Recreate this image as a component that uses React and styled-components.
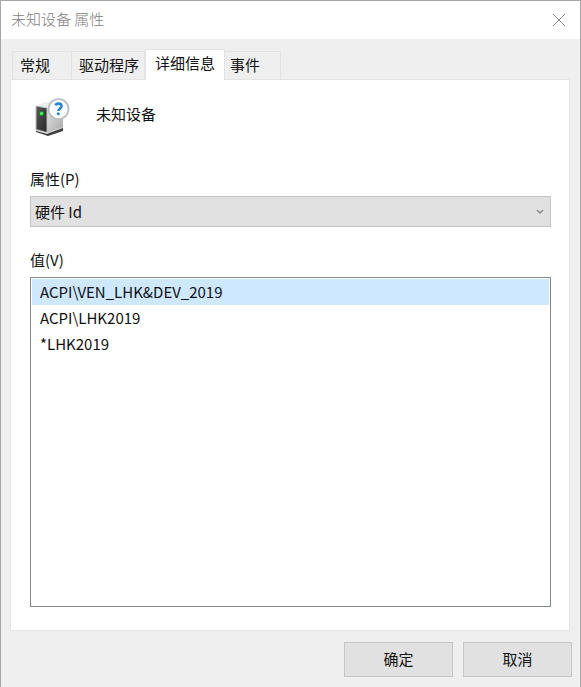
import React, { useState } from 'react';
import styled, { createGlobalStyle } from 'styled-components';

const TABS = ['常规', '驱动程序', '详细信息', '事件'];

const PROPERTIES = {
  '硬件 Id': ['ACPI\\VEN_LHK&DEV_2019', 'ACPI\\LHK2019', '*LHK2019'],
};

const DeviceIcon = () => (
  <svg width="36" height="40" viewBox="0 0 36 40" aria-hidden="true">
    <defs>
      <linearGradient id="front" x1="0" y1="0" x2="1" y2="1">
        <stop offset="0" stopColor="#5a5a5a" />
        <stop offset="1" stopColor="#262626" />
      </linearGradient>
      <linearGradient id="side" x1="0" y1="0" x2="1" y2="1">
        <stop offset="0" stopColor="#e6e6e6" />
        <stop offset="1" stopColor="#a9a9ab" />
      </linearGradient>
    </defs>
    <path d="M2 31 L13 34 L29 28 V33 L14 38 L2 34 Z" fill="#3d3d3d" />
    <path d="M2 31 L13 34 L29 28 V30 L13 36 L2 33 Z" fill="#cfcfcf" />
    <path d="M2 8 L12 4 L29 6 L13 11 Z" fill="#ececec" />
    <path d="M13 10 L29 6 V29 L13 34 Z" fill="url(#side)" />
    <path d="M2 8 L13 10 V34 L2 31 Z" fill="url(#front)" />
    <path d="M2 31 V8 L13 10 V34" fill="none" stroke="#bdbdbd" />
    <circle cx="7.5" cy="15.5" r="2.6" fill="#1f7a2c" />
    <circle cx="7.5" cy="15.5" r="1.7" fill="#3df252" />
    <circle cx="24.5" cy="11" r="10" fill="#fafbfc" stroke="#b9bcbe" strokeWidth="1.6" />
    <path
      d="M21.5 7.4 C22.2 5 27.5 4.8 27.5 8.1 C27.5 10.4 24.6 10.4 24.4 13"
      fill="none"
      stroke="#2c86cc"
      strokeWidth="2.6"
    />
    <circle cx="24.3" cy="15.8" r="1.5" fill="#2c86cc" />
  </svg>
);

const App = () => {
  const [activeTab, setActiveTab] = useState('详细信息');
  const [property, setProperty] = useState('硬件 Id');
  const [value, setValue] = useState(PROPERTIES[property][0]);

  return (
    <>
      <GlobalStyle />
      <Dialog role="dialog" aria-labelledby="dialog-title">
        <TitleBar>
          <Title id="dialog-title">未知设备 属性</Title>
          <CloseButton type="button" aria-label="关闭">
            <svg width="12" height="12" viewBox="0 0 12 12" aria-hidden="true">
              <path d="M0 0 L12 12 M12 0 L0 12" stroke="#8a8a8a" />
            </svg>
          </CloseButton>
        </TitleBar>

        <TabList role="tablist">
          {TABS.map(tab => (
            <Tab
              key={tab}
              type="button"
              role="tab"
              aria-selected={tab === activeTab}
              $active={tab === activeTab}
              onClick={() => setActiveTab(tab)}
            >
              {tab}
            </Tab>
          ))}
        </TabList>

        <Panel role="tabpanel">
          <DeviceHeader>
            <DeviceIcon />
            <span>未知设备</span>
          </DeviceHeader>

          <Label htmlFor="property">属性(P)</Label>
          <SelectWrapper>
            <PropertySelect
              id="property"
              value={property}
              onChange={e => setProperty(e.target.value)}
            >
              {Object.keys(PROPERTIES).map(name => (
                <option key={name}>{name}</option>
              ))}
            </PropertySelect>
            <svg width="8" height="6" viewBox="0 0 8 6" aria-hidden="true">
              <path d="M1 1 L4 4 L7 1" fill="none" stroke="#808080" strokeWidth="1.3" />
            </svg>
          </SelectWrapper>

          <Label htmlFor="values">值(V)</Label>
          <ValueList
            id="values"
            size={3}
            value={value}
            onChange={e => setValue(e.target.value)}
          >
            {PROPERTIES[property].map(item => (
              <option key={item}>{item}</option>
            ))}
          </ValueList>
        </Panel>

        <Footer>
          <Button type="button">确定</Button>
          <Button type="button">取消</Button>
        </Footer>
      </Dialog>
    </>
  );
};

const GlobalStyle = createGlobalStyle`
  * {
    box-sizing: border-box;
  }

  body {
    margin: 0;
    background: #efefef;
  }

  body, button, select {
    font-family: "Noto Sans CJK SC", sans-serif;
    font-size: 15px;
    line-height: 20px;
    color: #111;
  }
`;

const Dialog = styled.div`
  display: flex;
  flex-direction: column;
  min-height: 100vh;
  border: 1px solid #a6a6a6;
  border-bottom: none;
  background: #efefef;
`;

const TitleBar = styled.header`
  display: flex;
  align-items: center;
  justify-content: space-between;
  height: 38px;
  padding: 0 15px 0 10px;
  background: #fff;
`;

const Title = styled.h1`
  margin: 0;
  padding-bottom: 2px;
  font-size: 15px;
  font-weight: 300;
  color: #808080;
`;

const CloseButton = styled.button`
  display: flex;
  padding: 0;
  border: none;
  background: none;
`;

const TabList = styled.div`
  display: flex;
  align-items: flex-end;
  margin: 10px 11px 0;
`;

const Tab = styled.button`
  height: ${props => props.$active ? '31px' : '28px'};
  margin-bottom: ${props => props.$active ? '-1px' : '0'};
  padding: ${props => props.$active ? '0 9px 4px' : '0 5px 2px 7px'};
  border: 1px solid #e2e2e2;
  border-left-width: ${props => props.$active ? '1px' : '0'};
  border-bottom: none;
  background: ${props => props.$active ? '#fff' : '#efefef'};
  z-index: ${props => props.$active ? '1' : '0'};

  &:first-child {
    padding: 0 21px 2px 7px;
    border-left-width: 1px;
  }

  &:last-child {
    padding: 0 20px 2px 5px;
  }
`;

const Panel = styled.main`
  display: flex;
  flex: 1;
  flex-direction: column;
  margin: 0 10px 0 9px;
  padding: 18px 18px 23px 19px;
  border: 1px solid #e4e4e4;
  background: #fff;
`;

const DeviceHeader = styled.div`
  display: flex;
  align-items: center;
  gap: 26px;
  margin-bottom: 31px;
  padding-left: 4px;

  span {
    padding-bottom: 8px;
  }
`;

const Label = styled.label`
  margin-bottom: 7px;
`;

const SelectWrapper = styled.div`
  position: relative;
  margin-bottom: 23px;

  svg {
    position: absolute;
    top: 13px;
    right: 7px;
    pointer-events: none;
  }
`;

const PropertySelect = styled.select`
  display: block;
  width: 100%;
  height: 31px;
  padding: 0 24px 0 4px;
  border: 1px solid #c4c4c4;
  border-radius: 0;
  background: #e1e1e1;
  appearance: none;
`;

const ValueList = styled.select`
  flex: 1;
  padding: 1px;
  border: 1px solid #828790;
  border-radius: 0;
  background: #fff;
  outline: none;

  option {
    min-height: 26px;
    padding: 2px 8px;
    color: #111;
  }

  option:checked {
    background: #cde8ff linear-gradient(#cde8ff, #cde8ff);
    color: #111;
  }
`;

const Footer = styled.footer`
  display: flex;
  justify-content: flex-end;
  gap: 10px;
  padding: 11px 8px 10px;
`;

const Button = styled.button`
  width: 109px;
  height: 35px;
  padding-bottom: 3px;
  border: 1px solid #c6c6c6;
  background: #e1e1e1;
`;

export default App;
